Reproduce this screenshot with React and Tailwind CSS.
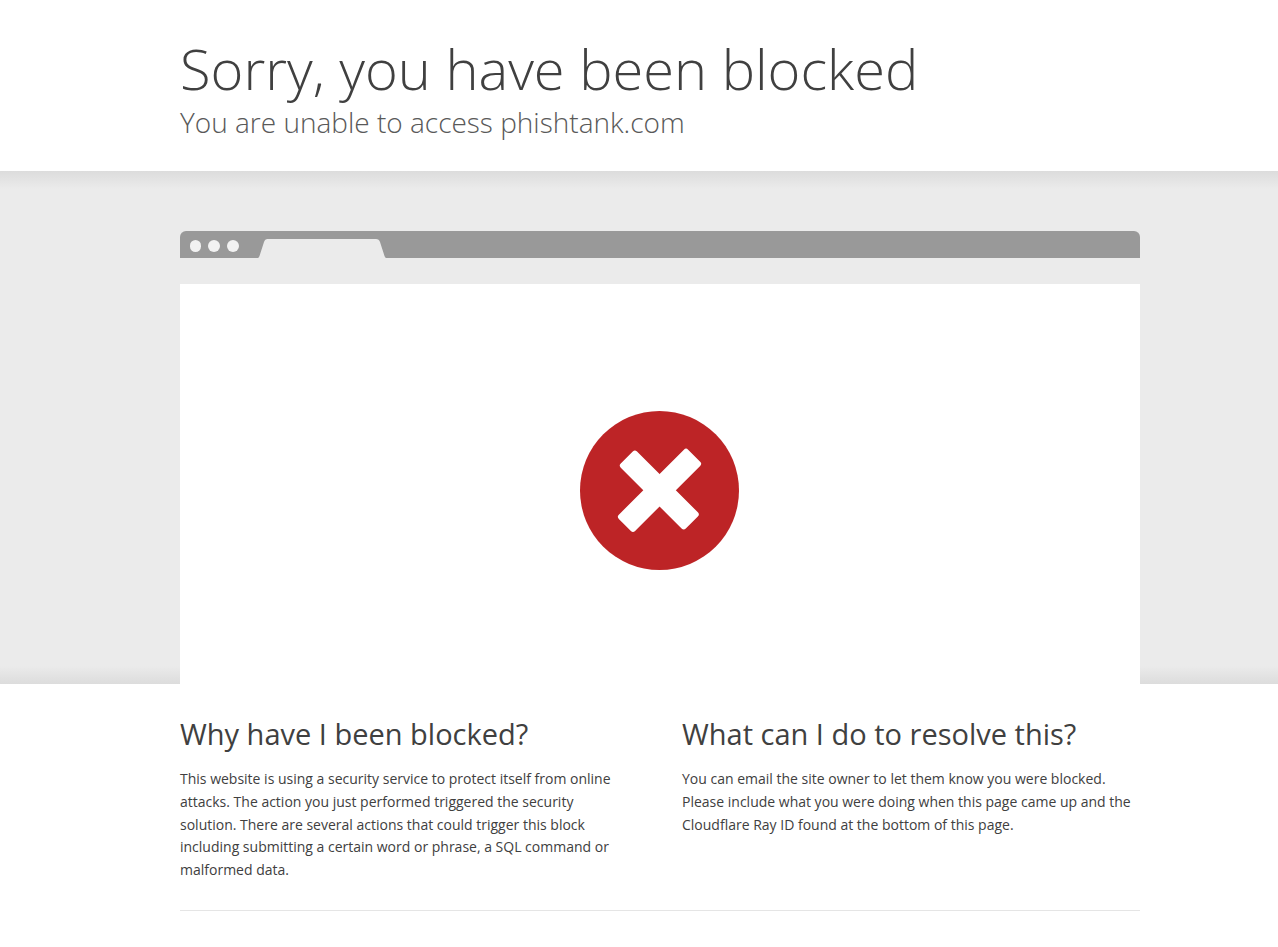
// Shared column that every section lines up with
function Wrapper({ children, className = '' }) {
  return (
    <div className="pl-[180px] pr-[138px]">
      <div className={`max-w-[960px] ${className}`}>{children}</div>
    </div>
  )
}

function BrowserBar() {
  return (
    <div className="flex h-[27px] items-end rounded-t-md bg-[#999999]">
      <div className="flex h-full items-center gap-[7px] pl-[10px] pt-[3px]">
        <span className="h-3 w-[11px] rounded-full bg-[#f2f2f2]" />
        <span className="h-3 w-3 rounded-full bg-[#f2f2f2]" />
        <span className="h-3 w-3 rounded-full bg-[#f2f2f2]" />
      </div>
      <svg className="ml-[19px] h-[19px] w-32" viewBox="0 0 128 19" aria-hidden="true">
        <path d="M0 19 Q1 18.500 1.500 17 L6 3 Q7 0 9.500 0 H118 Q121 0 122 3 L126.500 17 Q127 18.500 128 19 Z" fill="#ebebeb" />
      </svg>
    </div>
  )
}

function ErrorIcon() {
  return (
    <svg className="h-[159px] w-[159px]" viewBox="0 0 159 159" role="img" aria-label="Blocked">
      <circle cx="79.500" cy="79.500" r="79.500" fill="#bd2426" />
      <g fill="#ffffff">
        <rect x="-46" y="-11.500" width="92" height="23" rx="3" transform="translate(79.300 79) rotate(45)" />
        <rect x="-49" y="-11.500" width="98" height="23" rx="3" transform="translate(79.500 79.300) rotate(-45)" />
      </g>
    </svg>
  )
}

function Column({ title, children, className = '' }) {
  return (
    <section className={className}>
      <h2 className="text-[29px] leading-[39px] font-normal">{title}</h2>
      <p className="mt-[15px] text-sm leading-relaxed">{children}</p>
    </section>
  )
}

export default function App() {
  return (
    <div className="bg-white font-['Open_Sans',sans-serif] text-[#404040]">
      <header className="pt-8 pb-[31px]">
        <Wrapper>
          <h1 className="text-[56px] leading-[72px] font-light">Sorry, you have been blocked</h1>
          <h2 className="text-[28px] leading-[36px] font-light text-[#595959]">You are unable to access phishtank.com</h2>
        </Wrapper>
      </header>

      <main>
        <div className="bg-[linear-gradient(to_bottom,#dcdcdc,#ebebeb_18px,#ebebeb_calc(100%-18px),#dcdcdc)] pt-[60px]">
          <Wrapper>
            <BrowserBar />
            <div className="mt-[26px] flex justify-center bg-white pt-[127px] pr-[2px] pb-[114px]">
              <ErrorIcon />
            </div>
          </Wrapper>
        </div>

        <Wrapper className="border-b border-[#e5e5e5] pt-[30px] pb-7">
          <div className="grid grid-cols-2 gap-11">
            <Column title="Why have I been blocked?" className="pr-4">
              This website is using a security service to protect itself from online attacks. The action you just
              performed triggered the security solution. There are several actions that could trigger this block
              including submitting a certain word or phrase, a SQL command or malformed data.
            </Column>
            <Column title="What can I do to resolve this?">
              You can email the site owner to let them know you were blocked. Please include what you were doing when
              this page came up and the Cloudflare Ray ID found at the bottom of this page.
            </Column>
          </div>
        </Wrapper>
      </main>
    </div>
  )
}
